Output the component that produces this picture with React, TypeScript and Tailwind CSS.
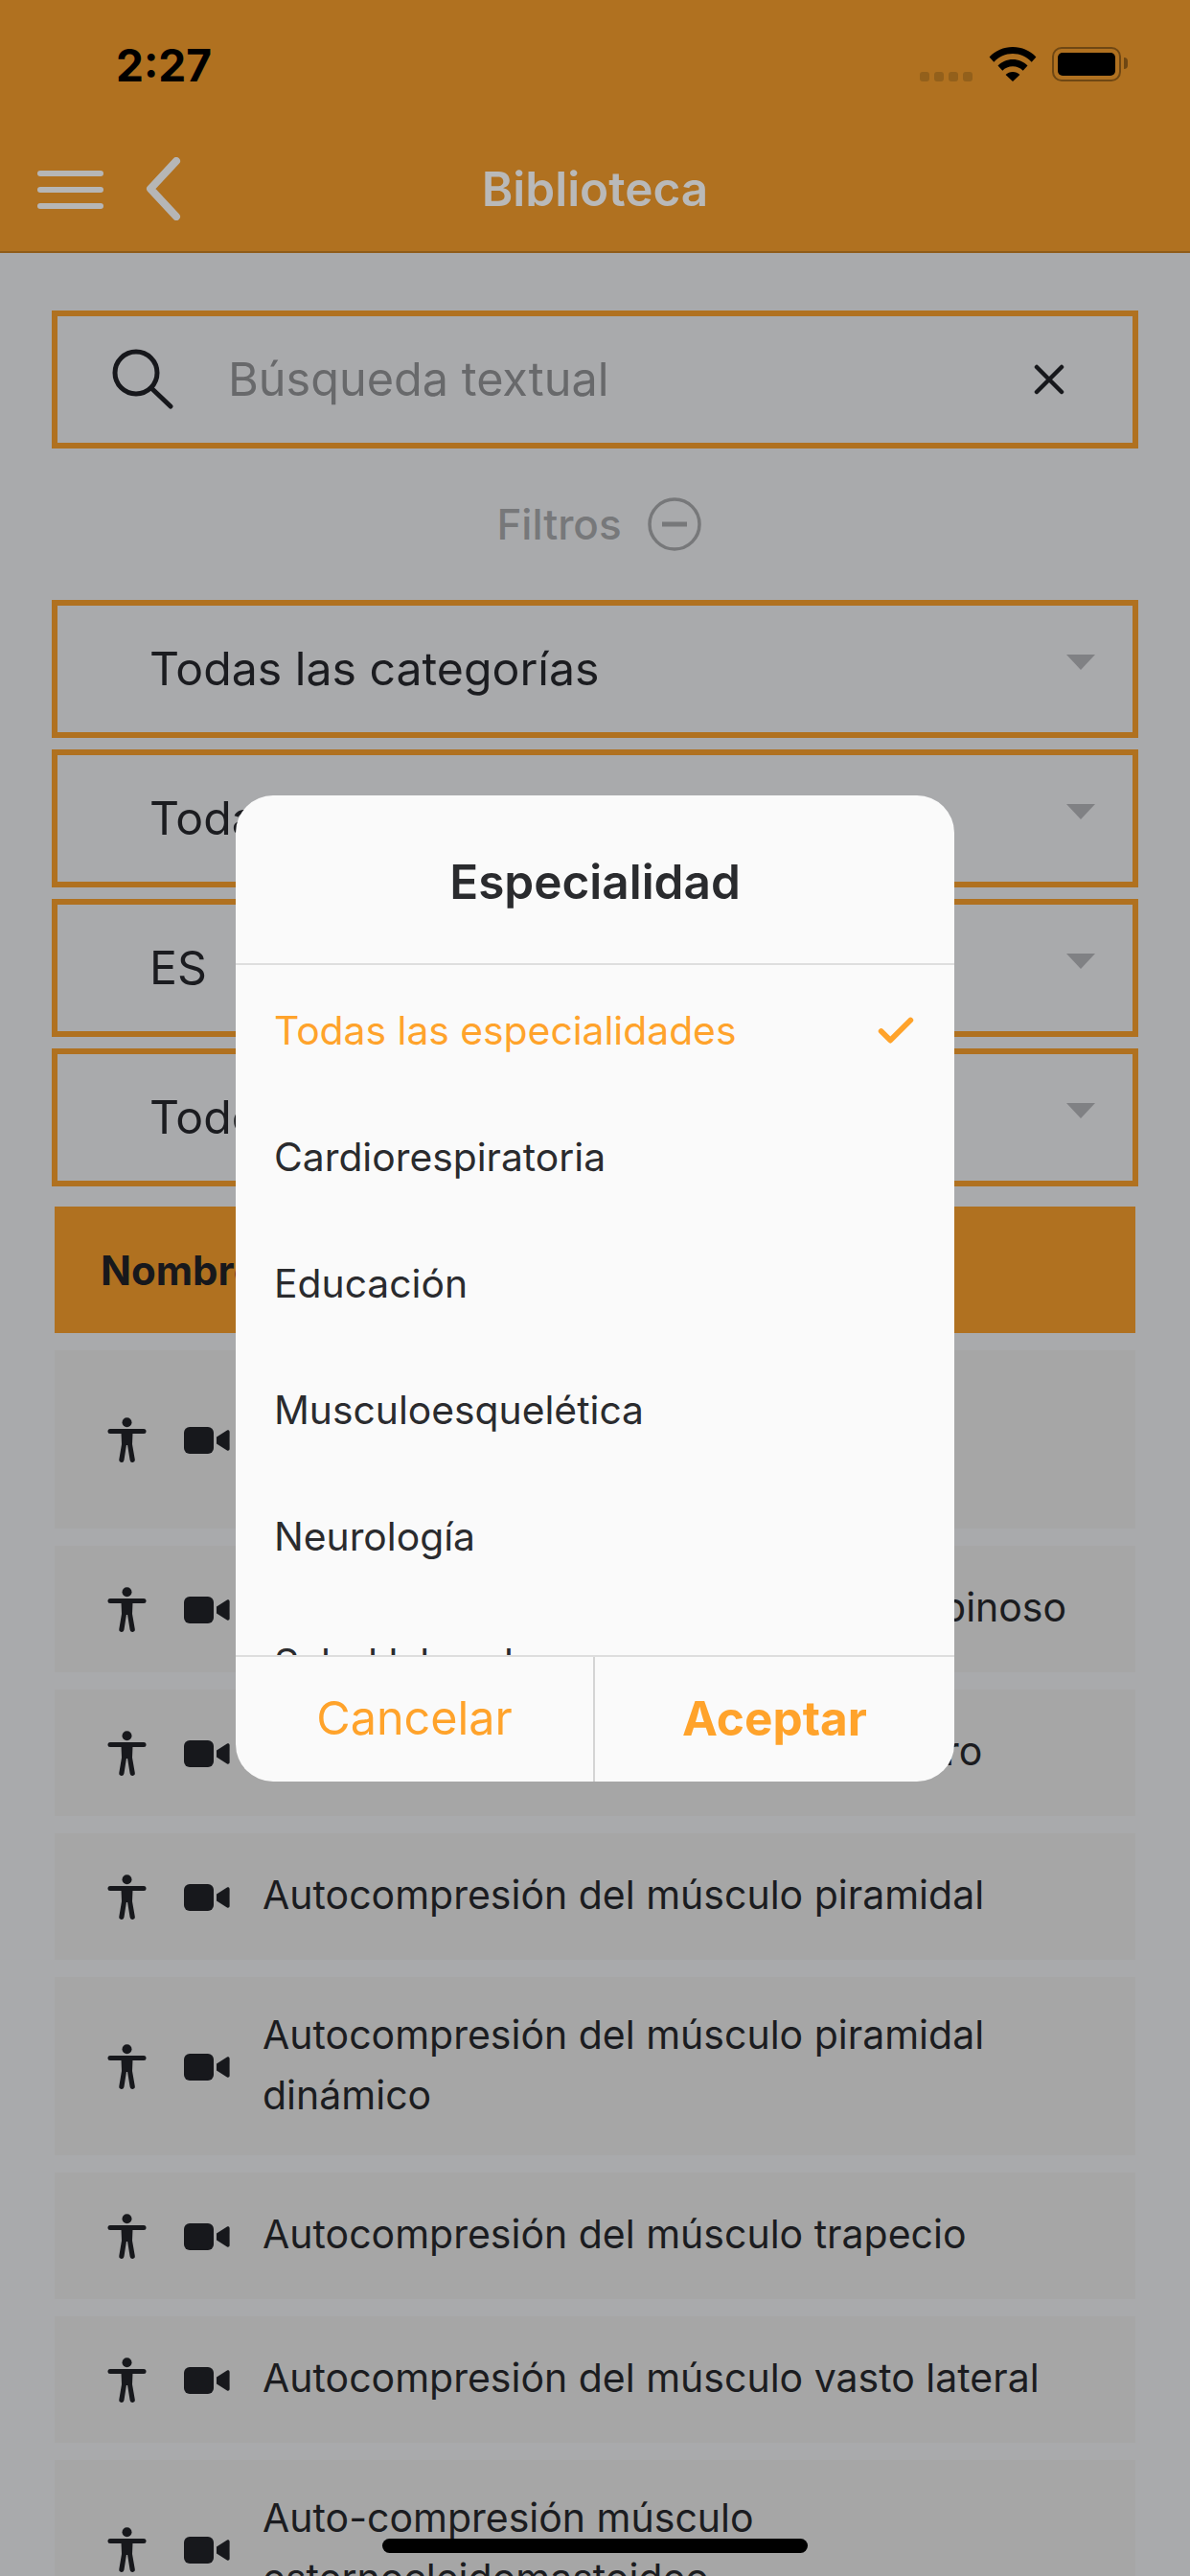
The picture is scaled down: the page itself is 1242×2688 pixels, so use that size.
import React from 'react';
import { Check } from 'lucide-react';

const PersonIcon = () => (
  <svg width="41" height="48" viewBox="0 0 40 48" fill="#17181c" className="shrink-0 mt-[2px]">
    <circle cx="20" cy="5.3" r="5" />
    <rect x="0" y="12" width="40" height="5" rx="2.5" />
    <path d="M14 16h12l-.5 12 2.8 16a2.6 2.6 0 0 1-5.2.6L20.6 29h-1.2L17 44.6a2.6 2.6 0 0 1-5.2-.6l2.7-16z" />
  </svg>
);

const VideoIcon = () => (
  <svg width="48" height="28" viewBox="0 0 48 28" fill="#17181c" className="shrink-0 mt-[2px]">
    <rect x="0" y="0" width="31" height="28" rx="6" />
    <path d="M34 10.5 45 3.6c1.2-.7 2.6.1 2.6 1.4v18c0 1.3-1.4 2.1-2.6 1.4L34 17.5z" />
  </svg>
);

const SelectBox = ({ label }: { label: string }) => (
  <div className="h-[144px] border-[6px] border-[#b07120] flex items-center relative pl-[96px]">
    <span className="text-[48.200px] leading-[60px] text-[#1b1c20]">{label}</span>
    <svg width="30" height="16" viewBox="0 0 30 16" className="absolute right-[39px] top-[51px]">
      <path d="M0 0h30L15 16z" fill="#808184" />
    </svg>
  </div>
);

const LibraryRow = ({ title }: { title: string }) => (
  <div className="bg-[#a6a6a6] min-h-[132px] py-[28.500px] flex items-center pl-[55px] pr-[20px]">
    <PersonIcon />
    <span className="ml-[39px]"><VideoIcon /></span>
    <span className="ml-[34px] pb-[3px] text-[41px] leading-[63px] text-[#1b1c20]">{title}</span>
  </div>
);

const rows = [
  'Autocompresión del músculo esternocleidomastoideo',
  'Autocompresión del músculo infraespinoso',
  'Autocompresión de la cara del hombro',
  'Autocompresión del músculo piramidal',
  'Autocompresión del músculo piramidal dinámico',
  'Autocompresión del músculo trapecio',
  'Autocompresión del músculo vasto lateral',
  'Auto-compresión músculo esternocleidomastoideo',
];

const options = [
  'Todas las especialidades',
  'Cardiorespiratoria',
  'Educación',
  'Musculoesquelética',
  'Neurología',
  'Salud laboral',
];

export default function App() {
  return (
    <div className="relative w-[1242px] h-[2688px] overflow-hidden bg-[#a9aaac] font-['Inter',sans-serif]">
      {/* Header */}
      <header className="h-[264px] bg-[#b07120] border-b-2 border-[#8f5c1a] relative">
        <div className="flex items-start justify-between h-[132px]">
          <span className="ml-[121px] mt-[41px] text-[46px] leading-[54px] font-bold text-black">2:27</span>
          <div className="flex items-center mt-[49px] mr-[72px]">
            <div className="flex gap-[5px] mt-[26px] mr-[17px]">
              <div className="w-[10px] h-[10px] rounded-[3px] bg-[#93601b]" />
              <div className="w-[10px] h-[10px] rounded-[3px] bg-[#93601b]" />
              <div className="w-[10px] h-[10px] rounded-[3px] bg-[#93601b]" />
              <div className="w-[10px] h-[10px] rounded-[3px] bg-[#93601b]" />
            </div>
            <svg width="50" height="36" viewBox="0 0 50 36" className="mr-[16px]">
              <path d="M25 0C15.500 0 7 3.800 .6 10.500l4.700 5.200C10.500 10.300 17.400 7 25 7s14.500 3.300 19.700 8.700l4.700-5.200C43 3.800 34.500 0 25 0z" />
              <path d="M25 13c-6 0-11.500 2.500-15.500 6.500l4.800 5.200C17 22 20.800 20.300 25 20.300s8 1.700 10.700 4.400l4.800-5.200C36.500 15.500 31 13 25 13z" />
              <path d="M25 26c-2.900 0-5.500 1.200-7.400 3.100L25 36l7.400-6.900C30.500 27.200 27.900 26 25 26z" />
            </svg>
            <div className="w-[72px] h-[36px] rounded-[10px] border-[2px] border-[#6f4713] p-[4px] relative">
              <div className="w-full h-full rounded-[5px] bg-black" />
              <div className="absolute -right-[9px] top-[9px] w-[4px] h-[12px] rounded-r-[4px] bg-[#6f4713]" />
            </div>
          </div>
        </div>
        <div className="flex items-center h-[130px] relative">
          <div className="ml-[39px] w-[69px] flex flex-col gap-[11px] mt-[2px]">
            <div className="h-[6px] rounded-full bg-[#b6b6b6]" />
            <div className="h-[6px] rounded-full bg-[#b6b6b6]" />
            <div className="h-[6px] rounded-full bg-[#b6b6b6]" />
          </div>
          <svg width="40" height="66" viewBox="0 0 40 66" fill="none" className="ml-[43px]">
            <path d="M33 4 6 33l27 29" stroke="#b6b6b6" strokeWidth="8" strokeLinecap="round" strokeLinejoin="round" />
          </svg>
          <span className="absolute inset-x-0 text-center text-[49.500px] leading-[56px] font-semibold text-[#b9b9b9]">Biblioteca</span>
        </div>
      </header>

      <main className="px-[54px] pt-[60px]">
        {/* Search */}
        <div className="h-[144px] border-[6px] border-[#b07120] flex items-center pl-[57px] pr-[71px]">
          <svg width="64" height="64" viewBox="0 0 64 64" fill="none" className="shrink-0">
            <circle cx="25" cy="25" r="22" stroke="#17181c" strokeWidth="5" />
            <path d="M41 41 61 60" stroke="#17181c" strokeWidth="5" strokeLinecap="round" />
          </svg>
          <span className="ml-[57px] text-[48.600px] leading-[60px] text-[#68696b]">Búsqueda textual</span>
          <svg width="32" height="32" viewBox="0 0 32 32" fill="none" className="ml-auto">
            <path d="M3 3 29 29M29 3 3 29" stroke="#17181c" strokeWidth="4.500" strokeLinecap="round" />
          </svg>
        </div>

        {/* Filters toggle */}
        <div className="h-[158px] flex items-center justify-center gap-[27px] pl-[8px]">
          <span className="text-[44px] leading-[56px] font-medium text-[#77787a]">Filtros</span>
          <svg width="56" height="56" viewBox="0 0 56 56" fill="none">
            <circle cx="28" cy="28" r="26" stroke="#77787a" strokeWidth="3.500" />
            <path d="M15 28h26" stroke="#77787a" strokeWidth="5" />
          </svg>
        </div>

        <div className="flex flex-col gap-[12px]">
          <SelectBox label="Todas las categorías" />
          <SelectBox label="Todas las especialidades" />
          <SelectBox label="ES" />
          <SelectBox label="Todos los tipos" />
        </div>

        {/* List */}
        <div className="mx-[3px] mt-[21px]">
          <div className="h-[132px] bg-[#b07120] flex items-center pl-[48px]">
            <span className="text-[42px] font-bold text-[#17181c]">Nombre</span>
          </div>
          <div className="flex flex-col gap-[18px] mt-[18px]">
            {rows.map(title => (
              <LibraryRow key={title} title={title} />
            ))}
          </div>
        </div>
      </main>

      {/* Specialty dialog */}
      <div className="absolute inset-0 flex items-center justify-center">
        <div className="w-[750px] h-[1029px] rounded-[39px] bg-[#fafafa] overflow-hidden flex flex-col">
          <div className="h-[177px] shrink-0 flex items-center justify-center border-b-2 border-[#dedede]">
            <span className="text-[49.500px] font-semibold text-[#2a2b2e] mt-[6px]">Especialidad</span>
          </div>
          <div className="flex-1 overflow-hidden pt-[3px]">
            {options.map((option, i) => (
              <div key={option} className="h-[132px] shrink-0 flex items-center justify-between pl-[40px] pr-[38px]">
                <span className={i === 0 ? 'text-[40.800px] text-[#ffa32b]' : 'text-[40.800px] text-[#2a2b2e]'}>{option}</span>
                {i === 0 && <Check size={46} color="#ffa32b" strokeWidth={3} />}
              </div>
            ))}
          </div>
          <div className="h-[132px] shrink-0 flex border-t-2 border-[#dedede]">
            <button className="w-[375px] border-r-2 border-[#d4d4d4] text-[48.500px] text-[#ffa32b]">Cancelar</button>
            <button className="flex-1 text-[49.500px] font-bold text-[#ffa32b]">Aceptar</button>
          </div>
        </div>
      </div>

      {/* Home indicator */}
      <div className="absolute left-[399px] top-[2649px] w-[444px] h-[15px] rounded-full bg-black" />
    </div>
  );
}
